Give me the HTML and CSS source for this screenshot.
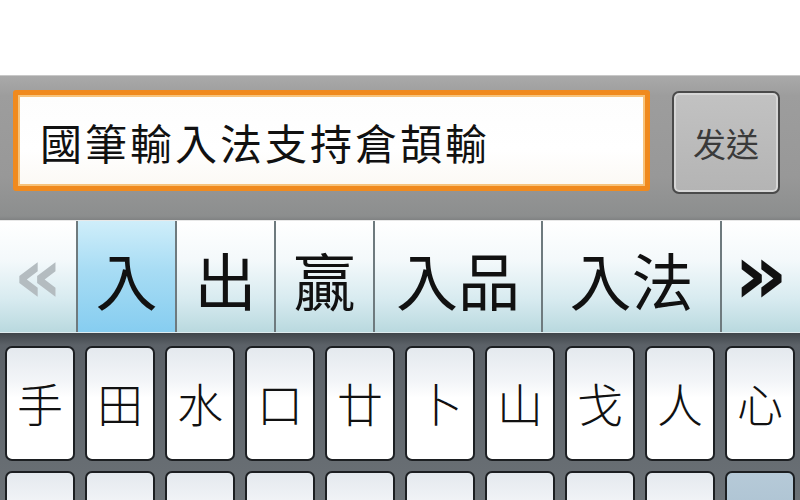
FILE: index.html
```html
<!DOCTYPE html>
<html lang="zh-Hant">
<head>
<meta charset="utf-8">
<link rel="stylesheet" href="styles.css">
</head>
<body>
<div class="screen">
  <div class="top"></div>
  <div class="bar">
    <div class="input">國筆輸入法支持倉頡輸</div>
    <div class="send">发送</div>
  </div>
  <div class="cands">
    <div class="cand arrow left">«</div>
    <div class="cand w98 active">入</div>
    <div class="cand w98">出</div>
    <div class="cand w99">贏</div>
    <div class="cand w167">入品</div>
    <div class="cand w178">入法</div>
    <div class="cand arrow right">»</div>
  </div>
  <div class="kb">
    <div class="row">
      <div class="key">手</div><div class="key">田</div><div class="key">水</div><div class="key">口</div><div class="key">廿</div>
      <div class="key">卜</div><div class="key">山</div><div class="key">戈</div><div class="key">人</div><div class="key">心</div>
    </div>
    <div class="row">
      <div class="key"></div><div class="key"></div><div class="key"></div><div class="key"></div><div class="key"></div>
      <div class="key"></div><div class="key"></div><div class="key"></div><div class="key"></div><div class="key blue"></div>
    </div>
  </div>
</div>
</body>
</html>
```
FILE: styles.css
```css
html, body {
  margin: 0;
  padding: 0;
  background: #ffffff;
}
.screen {
  width: 800px;
  height: 500px;
  overflow: hidden;
  font-family: "Noto Sans CJK TC", "Noto Sans CJK SC", sans-serif;
}
.top {
  height: 75px;
  background: #ffffff;
}
.bar {
  height: 145px;
  box-sizing: border-box;
  padding: 14px 0 0 13px;
  display: flex;
  align-items: flex-start;
  gap: 22px;
  background: linear-gradient(#a9a9a9 0px, #9d9d9d 20px, #989898 100px, #8c8e8e 140px, #7d7f80 145px);
  border-top: 1px solid #c8c8c8;
}
.input {
  width: 637px;
  height: 101px;
  box-sizing: border-box;
  border: 5px solid #f08a1e;
  border-radius: 3px;
  background: linear-gradient(#fdfdfd, #ffffff 60%, #fbf9f4);
  box-shadow: inset 0 0 0 2px #f7c37a;
  font-size: 42px;
  letter-spacing: 3px;
  color: #111;
  display: flex;
  align-items: center;
  padding-left: 22px;
  padding-top: 2px;
}
.send {
  width: 108px;
  height: 103px;
  box-sizing: border-box;
  border: 2px solid #4a4a4a;
  border-radius: 7px;
  background: linear-gradient(#c2c2c2, #b4b4b4);
  box-shadow: inset 0 0 0 2px #d6d6d6;
  color: #3a3a3a;
  font-size: 33px;
  display: flex;
  align-items: center;
  justify-content: center;
  margin-top: 1px;
}
.cands {
  height: 112px;
  display: flex;
  background: linear-gradient(#ffffff 0%, #f4f9fb 35%, #d8ebf0 70%, #b9d9df 100%);
  border-top: 1px solid #e8e8e8;
  box-sizing: border-box;
}
.cand {
  height: 100%;
  display: flex;
  align-items: center;
  justify-content: center;
  font-size: 62px;
  color: #111;
  border-right: 2px solid #6e7a7e;
  box-sizing: border-box;
  line-height: 1;
  padding-top: 4px;
}
.w98 { width: 99px; }
.w99 { width: 99px; }
.w167 { width: 168px; }
.w178 { width: 179px; }
.cand.active {
  background: linear-gradient(#cfeefa 0%, #a7dcf4 45%, #86cdf0 100%);
}
.arrow {
  font-family: "DejaVu Sans", sans-serif;
  font-weight: bold;
}
.arrow.left {
  width: 78px;
  font-size: 76px;
  color: #b4bcc0;
  padding-bottom: 6px;
}
.arrow.right {
  flex: 1;
  font-size: 84px;
  border-right: none;
  color: #111;
  padding-bottom: 10px;
}
.kb {
  height: 168px;
  box-sizing: border-box;
  padding: 13px 5px 0 5px;
  background: linear-gradient(#3f454a 0px, #5b6167 12px, #6b7176 100%);
  display: flex;
  flex-direction: column;
  gap: 10px;
  border-top: 1px solid #e0ecef;
}
.row {
  display: flex;
  gap: 10px;
}
.key {
  width: 70px;
  height: 115px;
  flex: none;
  box-sizing: border-box;
  border: 2px solid #1c1f22;
  border-radius: 7px;
  background: linear-gradient(#e4e9ee 0%, #f3f5f8 30%, #ffffff 45%, #ffffff 100%);
  display: flex;
  align-items: center;
  justify-content: center;
  font-size: 46px;
  font-weight: 300;
  color: #111;
  padding-bottom: 4px;
}
.key.blue {
  background: linear-gradient(#b6cad8, #9fb8ca);
}
```
